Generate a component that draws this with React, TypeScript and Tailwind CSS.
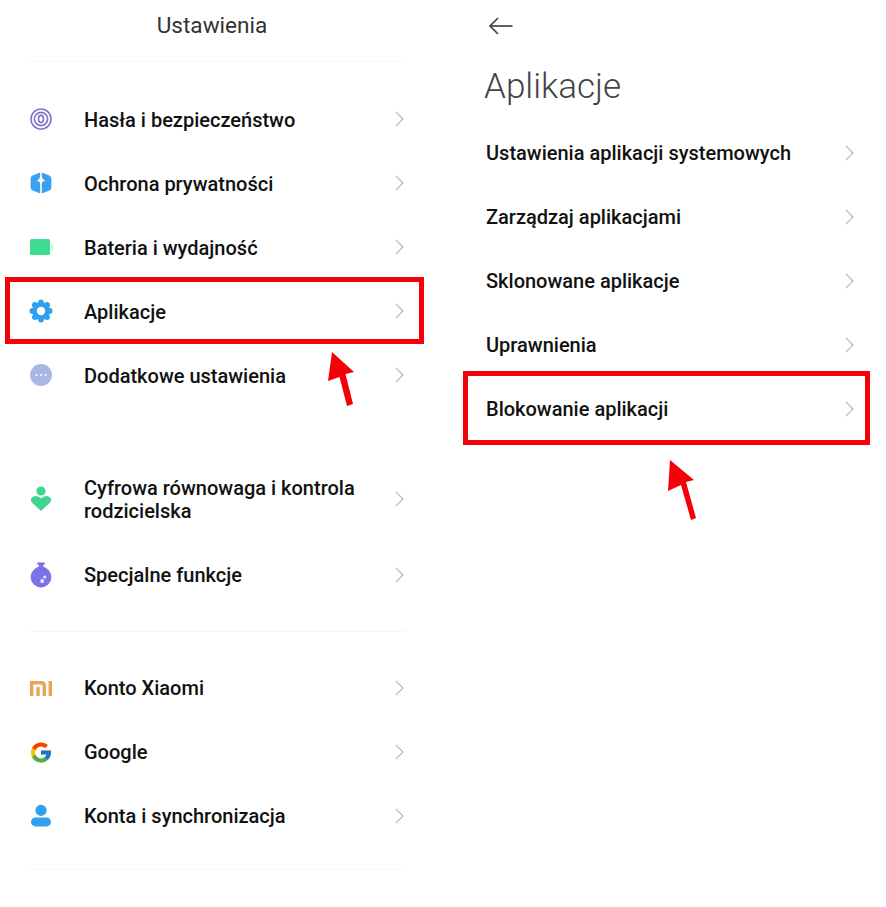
import React from 'react';
import { FcGoogle } from 'react-icons/fc';

const Chevron = () => (
  <svg width="12" height="18" viewBox="0 0 12 18" fill="none" className="shrink-0">
    <path d="M2.8 1.8 L10 9 L2.8 16.2" stroke="#b4b4b4" strokeWidth="1.1" />
  </svg>
);

const FingerprintIcon = () => (
  <svg width="24" height="24" viewBox="0 0 24 24" fill="none" stroke="#7f76cc" strokeWidth="1.6">
    <circle cx="12" cy="12" r="10" />
    <circle cx="12" cy="12" r="6.6" />
    <ellipse cx="12" cy="12" rx="2.5" ry="3.6" />
  </svg>
);

const ShieldIcon = () => (
  <svg width="24" height="24" viewBox="0 0 24 24">
    <path d="M11.2 1.4 L3.6 4.6 Q1.6 5.6 1.6 7.6 V16.4 Q1.6 18.4 3.6 19.4 L11.2 22.6 V12.6 Q11 10.2 7.6 9.4 Q11 8.6 11.2 5 Z" fill="#3c9ff0" />
    <path d="M12.8 1.4 L20.4 4.6 Q22.4 5.6 22.4 7.6 V16.4 Q22.4 18.4 20.4 19.4 L12.8 22.6 V12.6 Q13 10.2 16.4 9.4 Q13 8.6 12.8 5 Z" fill="#3c9ff0" />
  </svg>
);

const BatteryIcon = () => (
  <svg width="24" height="24" viewBox="0 0 24 24">
    <rect x="1" y="4" width="20" height="16" rx="1.5" fill="#3fdc90" />
    <rect x="22.6" y="9" width="1" height="6" fill="#8fe5bb" />
  </svg>
);

const GearIcon = () => {
  const lobes = [0, 45, 90, 135, 180, 225, 270, 315];
  return (
    <svg width="24" height="24" viewBox="0 0 24 24">
      {lobes.map((deg) => (
        <circle
          key={deg}
          cx={12 + 8.6 * Math.sin((deg * Math.PI) / 180)}
          cy={12 - 8.6 * Math.cos((deg * Math.PI) / 180)}
          r="2.9"
          fill="#2f9ff0"
        />
      ))}
      <circle cx="12" cy="12" r="9" fill="#2f9ff0" />
      <circle cx="12" cy="12" r="4.2" fill="#ffffff" />
    </svg>
  );
};

const MoreIcon = () => (
  <svg width="24" height="24" viewBox="0 0 24 24">
    <circle cx="12" cy="12" r="11" fill="#aab6e4" />
    <circle cx="7.5" cy="12" r="1" fill="#ffffff" />
    <circle cx="12" cy="12" r="1" fill="#ffffff" />
    <circle cx="16.5" cy="12" r="1" fill="#ffffff" />
  </svg>
);

const HeartPersonIcon = () => (
  <svg width="24" height="26" viewBox="0 0 24 26">
    <circle cx="12" cy="5" r="4.6" fill="#3fd690" />
    <path d="M12 25 L3.4 17 Q0.8 14.2 2.8 11.6 Q5.6 8.8 9 10.6 Q11 11.6 12 12.6 Q13 11.6 15 10.6 Q18.4 8.8 21.2 11.6 Q23.2 14.2 20.6 17 Z" fill="#3fd690" />
  </svg>
);

const FlaskIcon = () => (
  <svg width="24" height="26" viewBox="0 0 24 26">
    <rect x="8" y="0.5" width="8" height="2" rx="1" fill="#7a72e8" />
    <path d="M9.6 2 H14.4 V6 L19 9 H5 L9.6 6 Z" fill="#7a72e8" />
    <circle cx="12" cy="15" r="10.4" fill="#7a72e8" />
    <circle cx="15.8" cy="15" r="1.5" fill="#ffffff" opacity="0.85" />
    <circle cx="13.2" cy="19" r="2" fill="#ffffff" opacity="0.85" />
  </svg>
);

const MiIcon = () => (
  <svg width="24" height="24" viewBox="0 0 24 24" fill="none" stroke="#e8a654" strokeWidth="3.4">
    <path d="M2.7 20 V6.7 H12 Q15.3 6.7 15.3 10 V20" />
    <path d="M9 20 V11" />
    <path d="M21.3 5 V20" />
  </svg>
);

const PersonIcon = () => (
  <svg width="24" height="24" viewBox="0 0 24 24">
    <circle cx="12" cy="6.4" r="5.6" fill="#2f9ff0" />
    <rect x="2" y="13.4" width="20" height="9" rx="4.5" fill="#2f9ff0" />
  </svg>
);

type Item = { label: React.ReactNode; icon: React.ReactNode; tall?: boolean; lower?: boolean };

const Row = ({ label, icon, tall, lower }: Item) => (
  <div className={`flex items-center pl-[29px] pr-[35px] ${tall ? 'h-[88px]' : 'h-16'}`}>
    <div className="w-6 h-6 flex items-center justify-center shrink-0">{icon}</div>
    <div className={`flex-1 ml-[31px] text-[20px] leading-[23px] font-medium text-[#111111] ${lower ? 'pt-0' : 'pt-[2px]'}`}>
      {label}
    </div>
    <Chevron />
  </div>
);

const SubRow = ({ label }: { label: string }) => (
  <div className="flex items-center h-16 pl-[40px] pr-[31px]">
    <div className="flex-1 text-[20px] font-medium text-[#111111]">{label}</div>
    <Chevron />
  </div>
);

const Divider = ({ className }: { className: string }) => (
  <div className={`h-px ml-[28px] mr-[35px] bg-[#f6f6f6] ${className}`} />
);

export default function App() {
  return (
    <div
      className="relative w-[886px] h-[907px] bg-white overflow-hidden flex"
      style={{ fontFamily: 'Roboto, sans-serif' }}
    >
      {/* settings list */}
      <div className="w-[440px] shrink-0">
        <div className="h-[50px] pr-[16px] pt-[2px] flex items-center justify-center text-[22.6px] text-[#333333]">Ustawienia</div>
        <Divider className="mt-[11px] mb-[25px]" />
        <Row label="Hasła i bezpieczeństwo" icon={<FingerprintIcon />} />
        <Row label="Ochrona prywatności" icon={<ShieldIcon />} />
        <Row label="Bateria i wydajność" icon={<BatteryIcon />} />
        <Row label="Aplikacje" icon={<GearIcon />} />
        <Row label="Dodatkowe ustawienia" icon={<MoreIcon />} />
        <div className="h-12" />
        <Row tall label={<>Cyfrowa równowaga i kontrola<br />rodzicielska</>} icon={<HeartPersonIcon />} />
        <Row lower label="Specjalne funkcje" icon={<FlaskIcon />} />
        <Divider className="mt-6 mb-6" />
        <Row lower label="Konto Xiaomi" icon={<MiIcon />} />
        <Row lower label="Google" icon={<FcGoogle size={25} />} />
        <Row lower label="Konta i synchronizacja" icon={<PersonIcon />} />
        <Divider className="mt-[21px]" />
      </div>

      {/* app settings */}
      <div className="w-[446px] shrink-0 pl-[6px]">
        <div className="h-[52px] flex items-center pl-[42px]">
          <svg width="26" height="22" viewBox="0 0 26 22" fill="none" stroke="#444444" strokeWidth="1.7">
            <path d="M24.5 11 H2" />
            <path d="M10 3 L2 11 L10 19" />
          </svg>
        </div>
        <div className="h-[69px] pl-[38px] text-[35px] leading-[70px] font-light text-[#444444]">Aplikacje</div>
        <SubRow label="Ustawienia aplikacji systemowych" />
        <SubRow label="Zarządzaj aplikacjami" />
        <SubRow label="Sklonowane aplikacje" />
        <SubRow label="Uprawnienia" />
        <SubRow label="Blokowanie aplikacji" />
      </div>

      {/* red annotations */}
      <div className="absolute left-[5px] top-[277px] w-[419px] h-[67px] border-[5px] border-[#f40008]" />
      <div className="absolute left-[463px] top-[371px] w-[407px] h-[74px] border-[5px] border-[#f40008]" />
      <svg className="absolute left-[320px] top-[345px]" width="45" height="65" viewBox="0 0 45 65">
        <path d="M12 7 L8 36 L19.5 32 L27 61 L33 59 L25.5 29 L34 27 Z" fill="#f40008" />
      </svg>
      <svg className="absolute left-[660px] top-[455px]" width="45" height="70" viewBox="0 0 45 70">
        <path d="M10 5 L8 36 L21 30 L31 65 L36 63 L26 27 L34 25 Z" fill="#f40008" />
      </svg>
    </div>
  );
}
